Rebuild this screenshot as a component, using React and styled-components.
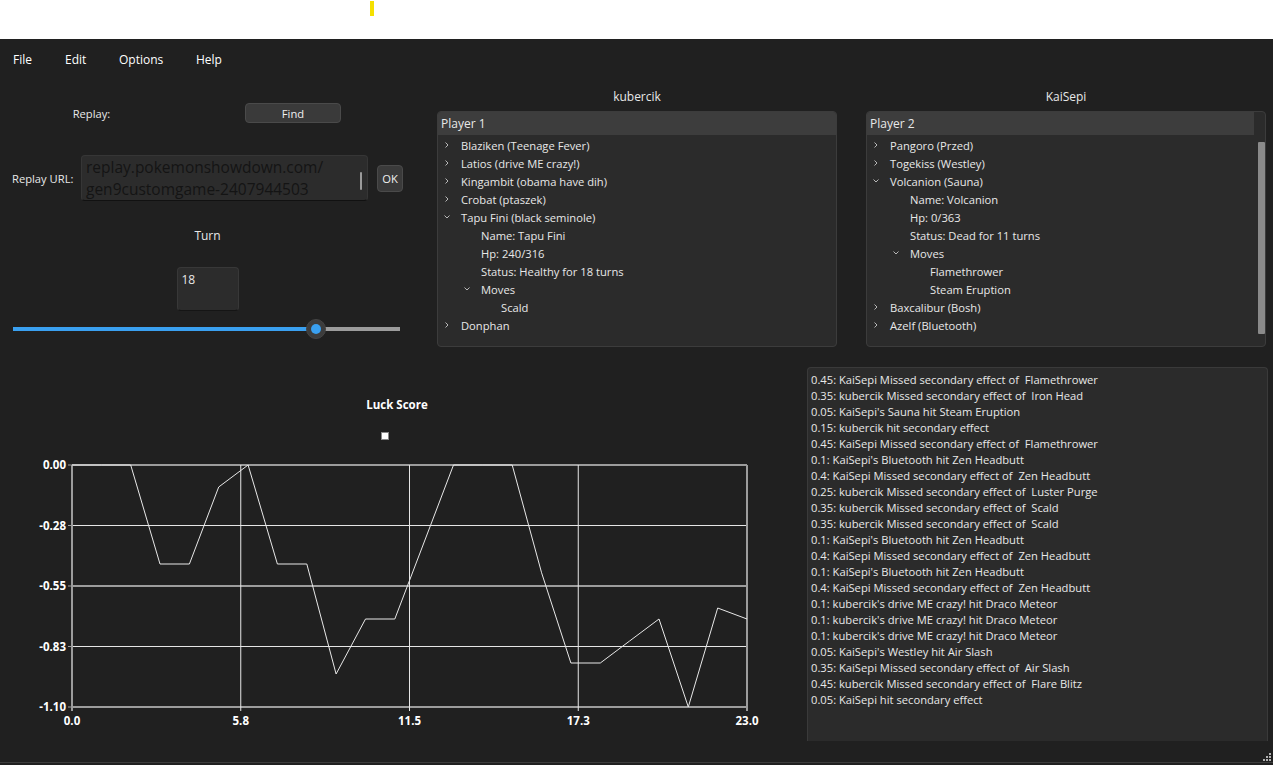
import React from "react";
import styled, { createGlobalStyle } from "styled-components";

const Global = createGlobalStyle`
  html, body { margin: 0; padding: 0; background: #ffffff; overflow: hidden; }
  body { font-family: "Open Sans", "Noto Sans", sans-serif; font-size: 11.2px; color: #e8e8e8; }
  * { box-sizing: border-box; }
`;

const TopStrip = styled.div`
  height: 39px;
  background: #ffffff;
  padding: 1px 0 0 370px;
`;
const Caret = styled.div`
  width: 4px;
  height: 15px;
  background: #f5e000;
`;

const Window = styled.div`
  height: 726px;
  background: #202020;
  display: flex;
  flex-direction: column;
  overflow: hidden;
  & > * { flex-shrink: 0; }
`;

const MenuBar = styled.div`
  height: 40px;
  display: grid;
  grid-template-columns: 52px 54px 77px auto;
  align-items: center;
  padding-left: 13px;
  color: #ffffff;
  font-size: 12px;
`;

const TopRow = styled.div`
  display: flex;
  height: 271px;
`;

const Controls = styled.div`
  width: 437px;
  display: flex;
  flex-direction: column;
`;

const ReplayRow = styled.div`
  margin-top: 24px;
  height: 20px;
  display: grid;
  grid-template-columns: 183px 220px;
  align-items: center;
  justify-items: center;
`;

const Button = styled.button`
  font: inherit;
  color: #f0f0f0;
  background: #3a3a3a;
  border: 1px solid #4a4a4a;
  border-radius: 4px;
  width: ${(p) => p.$w}px;
  height: ${(p) => p.$h}px;
  padding: 0;
`;

const UrlRow = styled.div`
  margin-top: 32px;
  display: flex;
  align-items: center;
  padding-left: 12px;
`;
const UrlLabel = styled.span`
  width: 69px;
`;
const UrlBox = styled.div`
  position: relative;
  width: 287px;
  height: 46px;
  background: #2c2c2c;
  border: 1px solid #363636;
  border-bottom: 1px solid #111;
  border-radius: 4px;
  padding: 0 0 0 4px;
  overflow: hidden;
  color: #141414;
  font-size: 15.5px;
  line-height: 22px;
  white-space: pre;
`;
const Scroll = styled.div`
  position: absolute;
  right: 5px;
  top: 16px;
  width: 2px;
  height: 18px;
  border-radius: 1px;
  background: #9a9a9a;
`;
const OkWrap = styled.div`
  margin-left: 9px;
`;

const TurnLabel = styled.div`
  margin-top: 26px;
  width: 415px;
  height: 16px;
  text-align: center;
  font-size: 12px;
`;

const SpinWrap = styled.div`
  margin-top: 24px;
  width: 415px;
  display: flex;
  justify-content: center;
`;
const Spin = styled.div`
  width: 62px;
  height: 44px;
  background: #2c2c2c;
  border: 1px solid #383838;
  border-bottom-color: #151515;
  border-radius: 4px;
  padding: 3px 0 0 4px;
  font-size: 12px;
`;

const SliderBox = styled.div`
  margin: 8px 0 0 13px;
  width: 387px;
  height: 20px;
  display: flex;
  align-items: center;
  position: relative;
`;
const Track = styled.div`
  height: 4px;
  background: ${(p) => p.$c};
  flex: ${(p) => (p.$grow ? 1 : "none")};
`;
const Thumb = styled.div`
  position: absolute;
  top: 0;
  width: 20px;
  height: 20px;
  margin-left: -10px;
  border-radius: 50%;
  background: #3c3c3c;
  border: 1px solid #444;
  display: flex;
  align-items: center;
  justify-content: center;
  &::after {
    content: "";
    width: 10px;
    height: 10px;
    border-radius: 50%;
    background: #3aa0f0;
  }
`;

const TreeCol = styled.div`
  width: 400px;
  margin-left: ${(p) => p.$ml}px;
  padding-top: 8px;
  display: flex;
  flex-direction: column;
`;
const TreeTitle = styled.div`
  height: 20px;
  line-height: 20px;
  text-align: center;
  font-size: 12px;
`;
const TreePanel = styled.div`
  margin-top: 4px;
  height: 236px;
  background: #2b2b2b;
  border: 1px solid #3c3c3c;
  border-radius: 4px;
  overflow: hidden;
  display: flex;
`;
const TreeMain = styled.div`
  flex: 1;
  display: flex;
  flex-direction: column;
`;
const TreeHead = styled.div`
  height: 23px;
  line-height: 23px;
  background: #3d3d3d;
  padding-left: 3px;
  font-size: 12px;
`;
const TreeBody = styled.div`
  padding-top: 1px;
`;
const TreeSide = styled.div`
  width: 11px;
  padding: 30px 0 12px 4px;
  display: flex;
`;
const SideThumb = styled.div`
  width: 2px;
  flex: 1;
  background: #8a8a8a;
  border-radius: 1px;
`;
const Row = styled.div`
  height: 18px;
  display: flex;
  align-items: center;
  padding-left: ${(p) => p.$level * 20 + 2}px;
  white-space: nowrap;
`;
const Arrow = styled.span`
  width: 14px;
  display: flex;
  justify-content: center;
`;
const RowText = styled.span`
  margin-left: 7px;
`;

const BottomRow = styled.div`
  display: flex;
  height: 391px;
`;
const ChartCol = styled.div`
  width: 807px;
  display: flex;
  flex-direction: column;
`;
const ChartTitle = styled.div`
  margin-top: 47px;
  width: 794px;
  height: 16px;
  text-align: center;
  font-weight: 700;
  font-size: 11.5px;
  color: #ffffff;
`;
const Legend = styled.div`
  margin: 19px 0 0 381px;
  width: 8px;
  height: 8px;
  background: #ffffff;
  border: 1px solid #888;
`;
const Plot = styled.svg`
  margin-top: 15px;
  display: block;
`;
const Log = styled.div`
  margin-top: 17px;
  width: 461px;
  height: 374px;
  background: #2b2b2b;
  border: 1px solid #3a3a3a;
  border-bottom: none;
  border-radius: 4px 4px 0 0;
  padding: 4px 0 0 3px;
  line-height: 16px;
  white-space: pre;
`;

const GripRow = styled.div`
  height: 21px;
  display: flex;
  justify-content: flex-end;
  align-items: flex-end;
  padding: 0 2px 1px 0;
`;
const StatusBar = styled.div`
  height: 20px;
  border-top: 1px solid #3c3c3c;
  color: #9a9a9a;
  padding-left: 2px;
  font-size: 12px;
  white-space: nowrap;
`;

const Chevron = ({ open }) => (
  <svg width="6" height="6" viewBox="0 0 6 6">
    <path
      d={open ? "M0.5 1.5 L3 4 L5.5 1.5" : "M1.5 0.5 L4 3 L1.5 5.5"}
      fill="none"
      stroke="#b8b8b8"
      strokeWidth="1"
    />
  </svg>
);

const player1 = [
  { t: "Blaziken (Teenage Fever)", l: 0, a: "c" },
  { t: "Latios (drive ME crazy!)", l: 0, a: "c" },
  { t: "Kingambit (obama have dih)", l: 0, a: "c" },
  { t: "Crobat (ptaszek)", l: 0, a: "c" },
  { t: "Tapu Fini (black seminole)", l: 0, a: "o" },
  { t: "Name: Tapu Fini", l: 1 },
  { t: "Hp: 240/316", l: 1 },
  { t: "Status: Healthy for 18 turns", l: 1 },
  { t: "Moves", l: 1, a: "o" },
  { t: "Scald", l: 2 },
  { t: "Donphan", l: 0, a: "c" },
];

const player2 = [
  { t: "Pangoro (Przed)", l: 0, a: "c" },
  { t: "Togekiss (Westley)", l: 0, a: "c" },
  { t: "Volcanion (Sauna)", l: 0, a: "o" },
  { t: "Name: Volcanion", l: 1 },
  { t: "Hp: 0/363", l: 1 },
  { t: "Status: Dead for 11 turns", l: 1 },
  { t: "Moves", l: 1, a: "o" },
  { t: "Flamethrower", l: 2 },
  { t: "Steam Eruption", l: 2 },
  { t: "Baxcalibur (Bosh)", l: 0, a: "c" },
  { t: "Azelf (Bluetooth)", l: 0, a: "c" },
];

const log = [
  "0.45: KaiSepi Missed secondary effect of  Flamethrower",
  "0.35: kubercik Missed secondary effect of  Iron Head",
  "0.05: KaiSepi's Sauna hit Steam Eruption",
  "0.15: kubercik hit secondary effect",
  "0.45: KaiSepi Missed secondary effect of  Flamethrower",
  "0.1: KaiSepi's Bluetooth hit Zen Headbutt",
  "0.4: KaiSepi Missed secondary effect of  Zen Headbutt",
  "0.25: kubercik Missed secondary effect of  Luster Purge",
  "0.35: kubercik Missed secondary effect of  Scald",
  "0.35: kubercik Missed secondary effect of  Scald",
  "0.1: KaiSepi's Bluetooth hit Zen Headbutt",
  "0.4: KaiSepi Missed secondary effect of  Zen Headbutt",
  "0.1: KaiSepi's Bluetooth hit Zen Headbutt",
  "0.4: KaiSepi Missed secondary effect of  Zen Headbutt",
  "0.1: kubercik's drive ME crazy! hit Draco Meteor",
  "0.1: kubercik's drive ME crazy! hit Draco Meteor",
  "0.1: kubercik's drive ME crazy! hit Draco Meteor",
  "0.05: KaiSepi's Westley hit Air Slash",
  "0.35: KaiSepi Missed secondary effect of  Air Slash",
  "0.45: kubercik Missed secondary effect of  Flare Blitz",
  "0.05: KaiSepi hit secondary effect",
];

// luck score per turn
const scores = [
  0, 0, 0, -0.45, -0.45, -0.1, 0, -0.45, -0.45, -0.95, -0.7, -0.7, -0.35, 0, 0, 0,
  -0.49, -0.9, -0.9, -0.8, -0.7, -1.1, -0.65, -0.7,
];

const Tree = ({ title, head, rows, scroll, ml }) => (
  <TreeCol $ml={ml}>
    <TreeTitle>{title}</TreeTitle>
    <TreePanel>
      <TreeMain>
        <TreeHead>{head}</TreeHead>
        <TreeBody>
          {rows.map((r, i) => (
            <Row key={i} $level={r.l}>
              <Arrow>{r.a && <Chevron open={r.a === "o"} />}</Arrow>
              <RowText>{r.t}</RowText>
            </Row>
          ))}
        </TreeBody>
      </TreeMain>
      {scroll && (
        <TreeSide>
          <SideThumb />
        </TreeSide>
      )}
    </TreePanel>
  </TreeCol>
);

const LuckChart = () => {
  const x0 = 72, x1 = 747, y0 = 10, y1 = 252;
  const px = (i) => x0 + ((x1 - x0) * i) / 23;
  const py = (v) => y0 + ((y1 - y0) * v) / -1.1;
  const pts = scores.map((v, i) => `${px(i).toFixed(1)},${py(v).toFixed(1)}`).join(" ");
  const yTicks = [
    ["0.00", 0, true],
    ["-0.28", 0.25, false],
    ["-0.55", 0.5, true],
    ["-0.83", 0.75, false],
    ["-1.10", 1, true],
  ];
  const xTicks = [
    ["0.0", 0, true],
    ["5.8", 0.25, false],
    ["11.5", 0.5, false],
    ["17.3", 0.75, false],
    ["23.0", 1, true],
  ];
  return (
    <Plot width="800" height="280" viewBox="0 0 800 280">
      {yTicks.map(([label, f, thick]) => {
        const y = y0 + (y1 - y0) * f;
        return (
          <g key={label}>
            <line x1={x0} x2={x1} y1={y} y2={y} stroke={thick ? "#9c9c9c" : "#e6e6e6"} strokeWidth={thick ? 2 : 1} />
            <line x1={x0 - 4} x2={x0} y1={y} y2={y} stroke="#9c9c9c" strokeWidth="1" />
            <text x={x0 - 6} y={y + 4} textAnchor="end" fill="#ffffff" fontSize="11.5" fontWeight="700" fontFamily="Open Sans, sans-serif">
              {label}
            </text>
          </g>
        );
      })}
      {xTicks.map(([label, f, thick]) => {
        const x = x0 + (x1 - x0) * f;
        return (
          <g key={label}>
            <line x1={x} x2={x} y1={y0} y2={y1 + 4} stroke={thick ? "#9c9c9c" : "#e6e6e6"} strokeWidth={thick ? 2 : 1} />
            <text x={x} y={y1 + 18} textAnchor="middle" fill="#ffffff" fontSize="11.5" fontWeight="700" fontFamily="Open Sans, sans-serif">
              {label}
            </text>
          </g>
        );
      })}
      <polyline points={pts} fill="none" stroke="#e8e8e8" strokeWidth="1" />
    </Plot>
  );
};

const Grip = () => (
  <svg width="9" height="9" viewBox="0 0 9 9">
    {[[7, 1], [4, 4], [7, 4], [1, 7], [4, 7], [7, 7]].map(([x, y], i) => (
      <rect key={i} x={x} y={y} width="2" height="2" fill="#b0b0b0" />
    ))}
  </svg>
);

export default function App() {
  const turn = 18;
  const pct = (turn / 23) * 100;
  return (
    <>
      <Global />
      <TopStrip>
        <Caret />
      </TopStrip>
      <Window>
        <MenuBar>
          <span>File</span>
          <span>Edit</span>
          <span>Options</span>
          <span>Help</span>
        </MenuBar>
        <TopRow>
          <Controls>
            <ReplayRow>
              <span>Replay:</span>
              <Button $w={96} $h={20}>Find</Button>
            </ReplayRow>
            <UrlRow>
              <UrlLabel>Replay URL:</UrlLabel>
              <UrlBox>
                {"replay.pokemonshowdown.com/\ngen9customgame-2407944503"}
                <Scroll />
              </UrlBox>
              <OkWrap>
                <Button $w={26} $h={27}>OK</Button>
              </OkWrap>
            </UrlRow>
            <TurnLabel>Turn</TurnLabel>
            <SpinWrap>
              <Spin>{turn}</Spin>
            </SpinWrap>
            <SliderBox>
              <Track $c="#3aa0f0" style={{ width: `${pct}%` }} />
              <Track $c="#9c9c9c" $grow />
              <Thumb style={{ left: `${pct}%` }} />
            </SliderBox>
          </Controls>
          <Tree title="kubercik" head="Player 1" rows={player1} ml={0} />
          <Tree title="KaiSepi" head="Player 2" rows={player2} scroll ml={29} />
        </TopRow>
        <BottomRow>
          <ChartCol>
            <ChartTitle>Luck Score</ChartTitle>
            <Legend />
            <LuckChart />
          </ChartCol>
          <Log>{log.join("\n")}</Log>
        </BottomRow>
        <GripRow>
          <Grip />
        </GripRow>
        <StatusBar>\Dokumenty\replays\kubercik (1)\luck-score\save (1).json</StatusBar>
      </Window>
    </>
  );
}
